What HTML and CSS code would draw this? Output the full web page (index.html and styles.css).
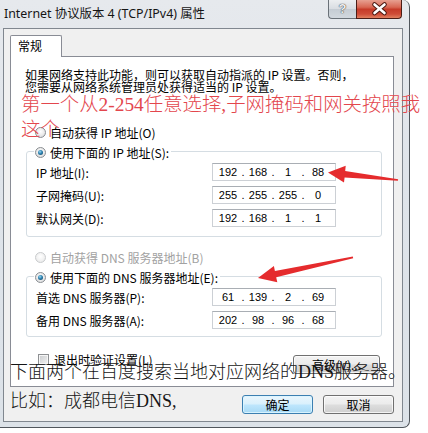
FILE: index.html
```html
<!DOCTYPE html>
<html lang="zh-CN">
<head>
<meta charset="utf-8">
<title>Internet 协议版本 4 (TCP/IPv4) 属性</title>
<link rel="stylesheet" href="styles.css">
</head>
<body>
<div class="window">
  <div class="titlebar">
    <div class="title">Internet 协议版本 4 (TCP/IPv4) 属性</div>
    <div class="caption">
      <div class="cbtn help">?</div>
      <div class="cbtn close">
        <svg width="45" height="18" viewBox="0 0 45 18">
          <path d="M17.5 4.5 L27.5 13 M27.5 4.5 L17.5 13" stroke="#4a1810" stroke-width="4.6" stroke-linecap="round"/>
          <path d="M17.5 4.5 L27.5 13 M27.5 4.5 L17.5 13" stroke="#ffffff" stroke-width="2.6" stroke-linecap="round"/>
        </svg>
      </div>
    </div>
  </div>
  <div class="body">
    <div class="tabs"><div class="tab">常规</div></div>
    <div class="panel">
      <p class="info">如果网络支持此功能，则可以获取自动指派的 IP 设置。否则，<br>您需要从网络系统管理员处获得适当的 IP 设置。</p>
      <div class="opt r1"><span class="radio"></span>自动获得 IP 地址(O)</div>
      <div class="group g1">
        <div class="legend"><span class="radio on"></span>使用下面的 IP 地址(S):</div>
        <div class="row first"><span class="lbl">IP 地址(I):</span>
          <div class="ip"><span class="seg">192</span><span class="dot">.</span><span class="seg">168</span><span class="dot">.</span><span class="seg">1</span><span class="dot">.</span><span class="seg">88</span></div>
        </div>
        <div class="row"><span class="lbl">子网掩码(U):</span>
          <div class="ip"><span class="seg">255</span><span class="dot">.</span><span class="seg">255</span><span class="dot">.</span><span class="seg">255</span><span class="dot">.</span><span class="seg">0</span></div>
        </div>
        <div class="row"><span class="lbl">默认网关(D):</span>
          <div class="ip"><span class="seg">192</span><span class="dot">.</span><span class="seg">168</span><span class="dot">.</span><span class="seg">1</span><span class="dot">.</span><span class="seg">1</span></div>
        </div>
      </div>
      <div class="opt dns disabled"><span class="radio dis"></span>自动获得 DNS 服务器地址(B)</div>
      <div class="group g2">
        <div class="legend"><span class="radio on"></span>使用下面的 DNS 服务器地址(E):</div>
        <div class="row first"><span class="lbl">首选 DNS 服务器(P):</span>
          <div class="ip"><span class="seg">61</span><span class="dot">.</span><span class="seg">139</span><span class="dot">.</span><span class="seg">2</span><span class="dot">.</span><span class="seg">69</span></div>
        </div>
        <div class="row"><span class="lbl">备用 DNS 服务器(A):</span>
          <div class="ip"><span class="seg">202</span><span class="dot">.</span><span class="seg">98</span><span class="dot">.</span><span class="seg">96</span><span class="dot">.</span><span class="seg">68</span></div>
        </div>
      </div>
      <div class="brow">
        <div class="chk"><span class="box"></span>退出时验证设置(L)</div>
        <div class="btn adv">高级(V)...</div>
      </div>
    </div>
    <div class="footer">
      <div class="btn ok">确定</div>
      <div class="btn">取消</div>
    </div>
  </div>
</div>

<div class="note note-red">第一个从2-254任意选择,子网掩码和网关按照我<br>这个</div>
<div class="note note-black">下面两个在百度搜索当地对应网络的DNS服务器。<br>比如：成都电信DNS,</div>

<svg class="arrows" width="428" height="433" viewBox="0 0 428 433">
  <polygon points="328,172.5 345.7,165.8 345.2,171 398.1,179.2 397.9,180.8 344.6,177.6 344,182.6" fill="#e52b2d"/>
  <polygon points="258,278 273.9,266 274.9,271 352.8,256.6 353.2,258.2 276.2,277.2 277.3,282.2" fill="#e52b2d"/>
</svg>
</body>
</html>
```

FILE: styles.css
```css
* { box-sizing: border-box; }
html, body { margin: 0; padding: 0; }
body {
  width: 428px;
  height: 433px;
  background: #ffffff;
  position: relative;
  overflow: hidden;
  font-family: "Noto Sans CJK SC", sans-serif;
  font-size: 12px;
  color: #000;
}

.window {
  width: 410px;
  height: 428px;
  padding: 0 6px 0 3px;
  background: linear-gradient(180deg, #e6e9ed 0%, #dfe4ea 40%, #dce2e8 100%);
  border-right: 1px solid #50565c;
  border-bottom: 1px solid #50565c;
  border-radius: 0 7px 7px 0;
  display: flex;
  flex-direction: column;
}

.titlebar {
  height: 28px;
  flex: none;
  display: flex;
  justify-content: space-between;
  align-items: flex-start;
}
.title {
  padding-left: 1px;
  height: 28px;
  line-height: 28px;
  font-family: "Noto Sans", "Noto Sans CJK SC", sans-serif;
  font-size: 12.4px;
  color: #151515;
}
.caption { display: flex; margin-right: 1px; }
.cbtn { height: 19px; }
.help {
  width: 28px;
  border: 1px solid #6a7178;
  border-top: none;
  border-right: none;
  border-radius: 0 0 0 4px;
  background: linear-gradient(180deg, #eceef0 0%, #d9dde2 48%, #c5ccd3 52%, #d2d8de 100%);
  text-align: center;
  font-family: "Liberation Sans", sans-serif;
  font-weight: bold;
  font-size: 13px;
  line-height: 18px;
  color: #eeeeee;
  text-shadow: 0 0 1px #3a3a3a, 0 0 1px #3a3a3a;
}
.close {
  width: 46px;
  border: 1px solid #4b1d16;
  border-top: none;
  border-radius: 0 0 4px 0;
  background: linear-gradient(180deg, #e7a091 0%, #d86753 40%, #c63b29 52%, #cf4c37 78%, #e1805f 100%);
}
.close svg { display: block; }

.body {
  flex: none;
  height: 394px;
  background: #f0f0f0;
  border: 1px solid #80878f;
  padding: 6px 8px 0 6px;
  display: flex;
  flex-direction: column;
}

.tabs { display: flex; }
.tab {
  position: relative;
  z-index: 1;
  width: 52px;
  height: 22px;
  border: 1px solid #898c95;
  border-bottom: none;
  border-radius: 2px 2px 0 0;
  background: #ffffff;
  padding-left: 7px;
  line-height: 20px;
}

.panel {
  margin-top: -1px;
  height: 331px;
  background: #ffffff;
  border: 1px solid #898c95;
  padding: 12px 10px 0 15px;
}

.info {
  margin: 0 0 0 -1px;
  line-height: 12px;
  white-space: nowrap;
}

.opt {
  display: flex;
  align-items: center;
  height: 14px;
}
.opt .radio { margin-left: 9px; margin-right: 4px; }
.r1 { margin-top: 32px; }
.dns { margin-top: 13px; }
.disabled { color: #a2a2a2; }

.radio {
  flex: none;
  position: relative;
  width: 11px;
  height: 11px;
  border-radius: 50%;
  border: 1px solid #8a8e92;
  background: radial-gradient(circle at 50% 40%, #ffffff 0%, #e9e9e9 55%, #cdd1d5 100%);
}
.radio.on::after {
  content: "";
  position: absolute;
  left: 2px;
  top: 2px;
  width: 5px;
  height: 5px;
  border-radius: 50%;
  background: radial-gradient(circle at 40% 35%, #9ad8f2 0%, #2b7fae 45%, #0f3d5a 100%);
}
.radio.dis {
  border-color: #c9cbcd;
  background: radial-gradient(circle at 50% 40%, #ffffff 0%, #f0f0f0 60%, #e0e2e4 100%);
}

.group {
  width: 356px;
  border: 1px solid #d5dde3;
  border-radius: 3px;
}
.g1 { margin-top: 12px; padding-bottom: 9px; }
.g2 { margin-top: 12px; padding-bottom: 7px; }
.legend {
  display: flex;
  align-items: center;
  width: fit-content;
  height: 14px;
  margin: -7px 0 0 7px;
  padding: 0 2px 0 1px;
  background: #ffffff;
}
.legend .radio { margin-right: 4px; }

.row {
  display: flex;
  align-items: center;
  height: 18px;
  margin-top: 5px;
  padding-left: 9px;
}
.row.first { margin-top: 4px; }
.lbl { width: 176px; white-space: nowrap; }
.ip {
  width: 124px;
  height: 18px;
  border: 1px solid #ccd0d5;
  border-top-color: #a9aeb4;
  background: #ffffff;
  display: flex;
  align-items: center;
  padding-left: 3px;
  font-family: "Liberation Sans", sans-serif;
  font-size: 11px;
}
.seg { width: 24px; text-align: center; }
.dot { width: 6px; text-align: center; }

.brow {
  width: 356px;
  margin-top: 15px;
  display: flex;
  justify-content: space-between;
  align-items: flex-start;
}
.chk {
  display: flex;
  align-items: center;
  height: 14px;
  margin-left: 12px;
}
.box {
  width: 11px;
  height: 11px;
  margin-right: 5px;
  border: 1px solid #8e9093;
  background: linear-gradient(135deg, #c9cbce 0%, #f3f3f3 100%);
  box-shadow: inset 0 0 0 1px #f6f6f6;
}

.btn {
  height: 19px;
  border: 1px solid #707070;
  border-radius: 3px;
  background: linear-gradient(180deg, #f3f3f3 0%, #ebebeb 48%, #dddddd 52%, #cfcfcf 100%);
  box-shadow: inset 0 0 0 1px rgba(255, 255, 255, 0.75);
  display: flex;
  align-items: center;
  justify-content: center;
  white-space: nowrap;
}
.adv { width: 87px; margin-top: 3px; margin-right: 2px; }

.footer {
  display: flex;
  justify-content: flex-end;
  gap: 10px;
  margin-top: 8px;
}
.footer .btn { width: 71px; }
.btn.ok {
  border-color: #3c7fb1;
  background: linear-gradient(180deg, #eaf6fd 0%, #d9f0fc 48%, #bee6fd 52%, #a7d9f5 100%);
  box-shadow: inset 0 0 0 1px rgba(220, 245, 255, 0.9);
}

.note {
  position: absolute;
  font-family: "Liberation Serif", "Noto Sans CJK SC", serif;
  font-weight: 300;
  white-space: nowrap;
}
.note-red {
  left: 21px;
  top: 92px;
  font-size: 19.4px;
  line-height: 25px;
  color: #e3464d;
}
.note-black {
  left: 10px;
  top: 358px;
  font-size: 18px;
  line-height: 29px;
  color: #151515;
}

.arrows {
  position: absolute;
  left: 0;
  top: 0;
  pointer-events: none;
}
```
